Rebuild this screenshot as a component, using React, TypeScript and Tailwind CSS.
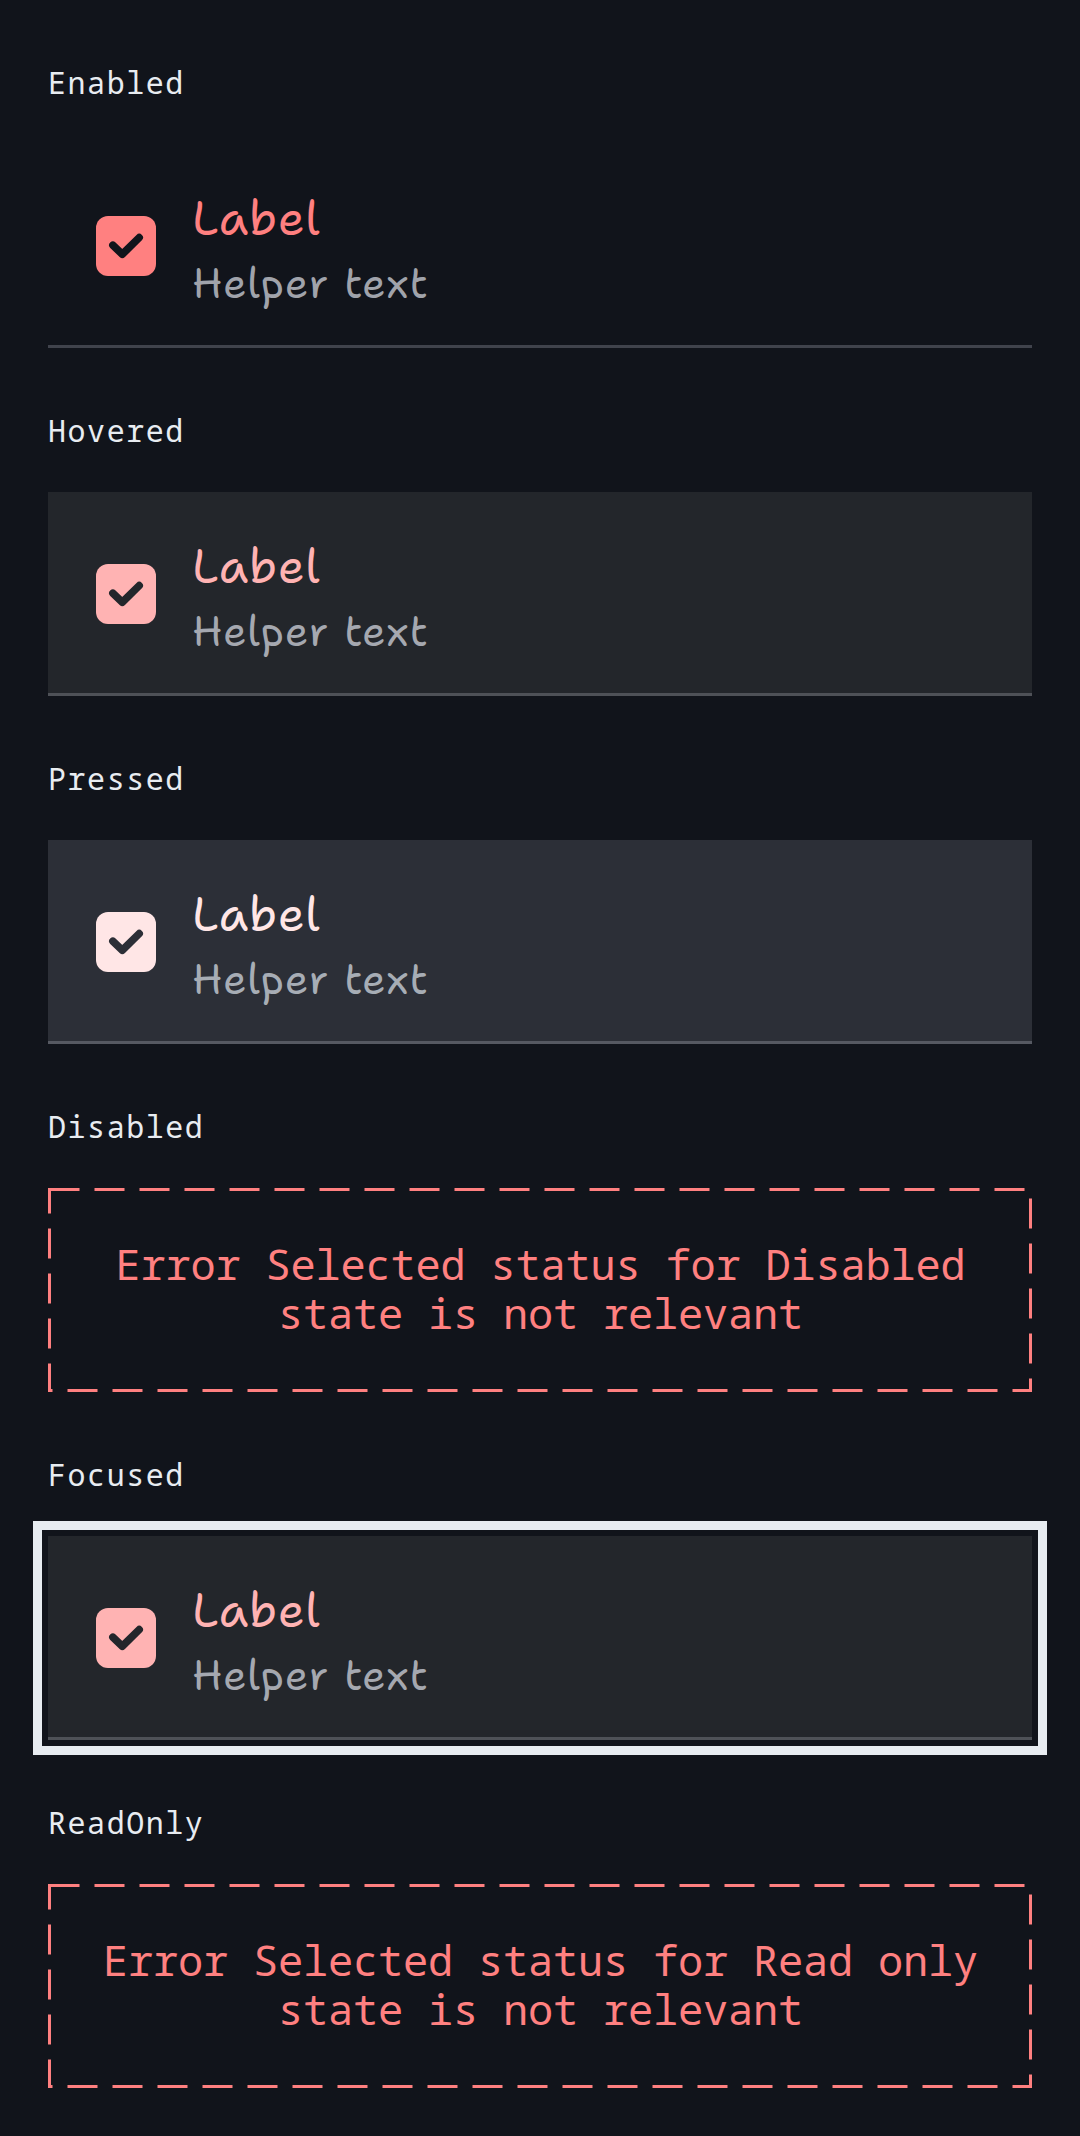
import type { ReactNode } from 'react';

type Tone = {
  card: string;
  box: string;
  mark: string;
  label: string;
  helper: string;
};

const enabled: Tone = {
  card: 'border-[#40434c]',
  box: 'bg-[#ff8080]',
  mark: 'text-[#11141b]',
  label: 'text-[#ff8080]',
  helper: 'text-[#a0a3ab]',
};

const hovered: Tone = {
  card: 'border-[#4e5157] bg-[#23262b]',
  box: 'bg-[#ffb3b3]',
  mark: 'text-[#23262b]',
  label: 'text-[#ffb3b3]',
  helper: 'text-[#a5a8b0]',
};

const pressed: Tone = {
  card: 'border-[#565962] bg-[#2c2f37]',
  box: 'bg-[#ffe6e6]',
  mark: 'text-[#2c2f37]',
  label: 'text-[#ffe6e6]',
  helper: 'text-[#a7adb5]',
};

const focused: Tone = {
  ...hovered,
  card: 'border-[#4e5157] bg-[#23262b] outline-[9px] outline-offset-[6px] outline-[#e8ecf1] outline-solid',
};

function CheckboxCard({ tone }: { tone: Tone }) {
  return (
    <div className={`flex h-[204px] border-b-[3px] pt-[41px] pl-12 ${tone.card}`}>
      <div className={`mt-[31px] size-[60px] rounded-xl ${tone.box}`}>
        <svg viewBox="0 0 60 60" className={`size-full ${tone.mark}`} fill="none">
          <path
            d="M16.9 29.2 26.3 38.3 43.2 21.6"
            stroke="currentColor"
            strokeWidth="7.6"
            strokeLinecap="round"
            strokeLinejoin="round"
          />
        </svg>
      </div>
      <div className="ml-9 flex flex-col font-['Shantell_Sans',cursive]">
        <span className={`text-[48px] leading-[66px] tracking-[0.7px] ${tone.label}`}>Label</span>
        <span className={`mt-[2px] text-[42px] leading-[60px] tracking-[0.72px] ${tone.helper}`}>Helper text</span>
      </div>
    </div>
  );
}

function Notice({ lines }: { lines: string[] }) {
  return (
    <div className="relative flex h-[204px] flex-col items-center justify-center pb-1 pl-px text-[42px] leading-[49px] tracking-[-0.2px] text-[#ff8080]">
      <svg viewBox="0 0 984 204" className="absolute inset-0 size-full" fill="none">
        <rect x="1.5" y="1.5" width="981" height="201" stroke="#ff8080" strokeWidth="3" strokeDasharray="30 15" />
      </svg>
      {lines.map((line) => (
        <span key={line}>{line}</span>
      ))}
    </div>
  );
}

function Section({ title, children }: { title: string; children: ReactNode }) {
  return (
    <section className="flex h-[348px] flex-col">
      <h2 className="h-[96px] text-[30px] leading-[70px] tracking-[1.55px] text-[#e8ecf1]">{title}</h2>
      {children}
    </section>
  );
}

export default function App() {
  return (
    <main className="flex h-[2136px] w-[1080px] flex-col overflow-hidden bg-[#11141b] px-12 pt-12 font-['Noto_Sans_Mono',monospace]">
      <Section title="Enabled">
        <CheckboxCard tone={enabled} />
      </Section>
      <Section title="Hovered">
        <CheckboxCard tone={hovered} />
      </Section>
      <Section title="Pressed">
        <CheckboxCard tone={pressed} />
      </Section>
      <Section title="Disabled">
        <Notice lines={['Error Selected status for Disabled', 'state is not relevant']} />
      </Section>
      <Section title="Focused">
        <CheckboxCard tone={focused} />
      </Section>
      <Section title="ReadOnly">
        <Notice lines={['Error Selected status for Read only', 'state is not relevant']} />
      </Section>
    </main>
  );
}
